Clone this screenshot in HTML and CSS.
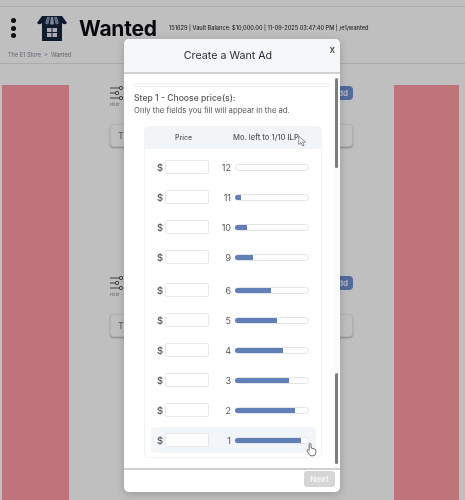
FILE: index.html
```html
<!DOCTYPE html>
<html lang="en">
<head>
    <meta charset="UTF-8">
    <meta name="viewport" content="width=device-width, initial-scale=1.0">
    <title>Wanted</title>
    <link rel="stylesheet" href="styles.css">
</head>
<body>
    <div class="page">
        <div class="top-line"></div>
        <header class="header">
            <div class="menu-dots"><span></span><span></span><span></span></div>
            <svg class="store-icon" viewBox="0 0 30 25">
                <rect x="5" y="7" width="20" height="18" fill="#16243d"/>
                <rect x="10" y="12" width="10" height="9" fill="#e4e6ea"/>
                <path d="M15 12v9M10 16.5h10" stroke="#16243d" stroke-width="1"/>
                <path d="M5 0h20l5 7q-2.500 2.500-5 0q-2.500 2.500-5 0q-2.500 2.500-5 0q-2.500 2.500-5 0q-2.500 2.500-5 0q-2.500 2.500-5 0z" fill="#16243d"/>
                <path d="M10 1h3l-1.500 7q-2 .8-3.500-.5zM17 1h3l2 6.500q-1.500 1.300-3.500.5z" fill="#7f93b5"/>
                <path d="M14 1h2l1 7q-2 1-4 0z" fill="#a9b6cc"/>
            </svg>
            <h1 class="page-title">Wanted</h1>
            <div class="status-line">151629 | Vault Balance: $10,000.00 | 11-09-2025 03:47:40 PM | /e1/wanted</div>
        </header>
        <div class="breadcrumb">The E1 Store &nbsp;&gt;&nbsp; Wanted</div>
        <div class="divider"></div>

        <main class="columns">
            <div class="red-panel"></div>
            <div class="center-col">
                <section class="ad-section">
                    <div class="tools">
                        <div class="filter">
                            <svg class="filter-icon" viewBox="0 0 14 14" fill="none" stroke="#555" stroke-width="1">
                                <path d="M0 2h9M0 7h5M0 12h9"/>
                                <circle cx="11" cy="2" r="1.700"/>
                                <circle cx="7" cy="7" r="1.700"/>
                                <circle cx="11" cy="12" r="1.700"/>
                            </svg>
                            <span>Filter</span>
                        </div>
                        <div class="add-btn">Add</div>
                    </div>
                    <div class="item-card">The</div>
                </section>
                <section class="ad-section">
                    <div class="tools">
                        <div class="filter">
                            <svg class="filter-icon" viewBox="0 0 14 14" fill="none" stroke="#555" stroke-width="1">
                                <path d="M0 2h9M0 7h5M0 12h9"/>
                                <circle cx="11" cy="2" r="1.700"/>
                                <circle cx="7" cy="7" r="1.700"/>
                                <circle cx="11" cy="12" r="1.700"/>
                            </svg>
                            <span>Filter</span>
                        </div>
                        <div class="add-btn">Add</div>
                    </div>
                    <div class="item-card">The</div>
                </section>
            </div>
            <div class="red-panel"></div>
        </main>
    </div>

    <div class="backdrop"></div>

    <div class="modal">
        <div class="modal-head">
            <h2>Create a Want Ad</h2>
            <span class="modal-close">x</span>
        </div>
        <div class="modal-body">
            <div class="progress-track"></div>
            <h3 class="step-title">Step 1 - Choose price(s):</h3>
            <p class="step-note">Only the fields you fill will appear in the ad.</p>
            <div class="price-card">
                <div class="price-head">
                    <span class="head-price">Price</span>
                    <span class="head-months">Mo. left to 1/10 ILP</span>
                </div>
                <div class="price-row"><span class="dollar">$</span><input class="price-input"><span class="months">12</span><div class="bar"></div></div>
                <div class="price-row"><span class="dollar">$</span><input class="price-input"><span class="months">11</span><div class="bar"><div class="bar-fill" style="width: 9%"></div></div></div>
                <div class="price-row"><span class="dollar">$</span><input class="price-input"><span class="months">10</span><div class="bar"><div class="bar-fill" style="width: 17%"></div></div></div>
                <div class="price-row"><span class="dollar">$</span><input class="price-input"><span class="months">9</span><div class="bar"><div class="bar-fill" style="width: 25%"></div></div></div>
                <div class="price-row row-gap"><span class="dollar">$</span><input class="price-input"><span class="months">6</span><div class="bar"><div class="bar-fill" style="width: 50%"></div></div></div>
                <div class="price-row"><span class="dollar">$</span><input class="price-input"><span class="months">5</span><div class="bar"><div class="bar-fill" style="width: 58%"></div></div></div>
                <div class="price-row"><span class="dollar">$</span><input class="price-input"><span class="months">4</span><div class="bar"><div class="bar-fill" style="width: 67%"></div></div></div>
                <div class="price-row"><span class="dollar">$</span><input class="price-input"><span class="months">3</span><div class="bar"><div class="bar-fill" style="width: 75%"></div></div></div>
                <div class="price-row"><span class="dollar">$</span><input class="price-input"><span class="months">2</span><div class="bar"><div class="bar-fill" style="width: 83%"></div></div></div>
                <div class="price-row row-active"><span class="dollar">$</span><input class="price-input"><span class="months">1</span><div class="bar"><div class="bar-fill" style="width: 92%"></div></div></div>
            </div>
            <div class="scroll-thumb thumb-top"></div>
            <div class="scroll-thumb thumb-bottom"></div>
        </div>
        <div class="modal-foot">
            <button class="next-btn">Next</button>
        </div>
    </div>

    <!-- Mouse pointers caught in the recording -->
    <svg class="cursor cursor-arrow" viewBox="0 0 12 16">
        <path d="M1 1v11l3-2.500 2 4.500 2-1-2-4.200h4z" fill="#fff" stroke="#667" stroke-width="1"/>
    </svg>
    <svg class="cursor cursor-hand" viewBox="0 0 14 18">
        <path d="M4 9V2.500a1.200 1.200 0 0 1 2.400 0V7l5 1.500q1.500.5 1.300 2.300l-.6 3.700q-.5 2.500-3 2.500H6.500q-1.500 0-2.300-1.500L1.500 11q-.6-1.300.6-1.800 1-.3 1.900 1z" fill="#fff" stroke="#444" stroke-width="1"/>
    </svg>
</body>
</html>
```

FILE: styles.css
```css
* {
    margin: 0;
    padding: 0;
    box-sizing: border-box;
    font-family: Inter, 'Liberation Sans', sans-serif;
}

html, body {
    width: 465px;
    height: 500px;
    overflow: hidden;
    background: #fff;
}

body {
    filter: blur(0.5px);
}

.page {
    height: 500px;
    display: flex;
    flex-direction: column;
    color: #111;
}

.top-line {
    height: 1px;
    margin-top: 6px;
    background: #e6e6e6;
}

.header {
    display: flex;
    align-items: center;
    height: 41px;
    padding: 1px 0 0 11px;
}

.menu-dots {
    display: flex;
    flex-direction: column;
    gap: 2.500px;
    width: 26px;
}

.menu-dots span {
    width: 5px;
    height: 5px;
    border-radius: 50%;
    background: #10141c;
}

.store-icon {
    width: 30px;
    height: 25px;
    margin-right: 12px;
}

.page-title {
    font-size: 21px;
    font-weight: 700;
    letter-spacing: -0.2px;
    width: 90px;
    color: #0b0d12;
}

.status-line {
    font-size: 5.600px;
    font-weight: 500;
    white-space: nowrap;
    color: #333;
}

.breadcrumb {
    height: 15px;
    padding-left: 8px;
    font-size: 5.600px;
    line-height: 15px;
    color: #7d8794;
}

.divider {
    height: 1px;
    background: #e4e4e4;
}

.columns {
    flex: 1;
    display: grid;
    grid-template-columns: 67px 1fr 65px;
    column-gap: 41px;
    padding: 21px 6px 0 2px;
}

.red-panel {
    background: #ff9ba6;
}

.center-col {
    display: flex;
    flex-direction: column;
    gap: 129px;
    padding-top: 1px;
}

.ad-section {
    height: 61px;
}

.tools {
    display: flex;
    justify-content: space-between;
    height: 38px;
}

.filter {
    display: flex;
    flex-direction: column;
    width: 14px;
    font-size: 4px;
    color: #777;
}

.filter-icon {
    width: 14px;
    height: 14px;
    margin-bottom: 2px;
}

.add-btn {
    height: 14px;
    padding: 0 5px;
    border-radius: 4px;
    background: #6c8fd2;
    color: #fff;
    font-size: 8px;
    font-weight: 600;
    line-height: 14px;
}

.item-card {
    height: 23px;
    padding-left: 7px;
    border: 1px solid #eee;
    border-radius: 4px;
    box-shadow: 0 1px 2px rgba(0, 0, 0, 0.3);
    background: #fff;
    font-size: 9px;
    line-height: 21px;
    color: #777;
}

.backdrop {
    position: absolute;
    inset: 0;
    background: rgba(0, 0, 0, 0.25);
}

.modal {
    position: absolute;
    left: 124px;
    top: 39px;
    width: 216px;
    height: 453px;
    display: flex;
    flex-direction: column;
    border-radius: 5px;
    background: #fff;
    box-shadow: 0 2px 10px rgba(0, 0, 0, 0.2);
}

.modal-head {
    position: relative;
    height: 35px;
    padding-right: 8px;
    border-bottom: 2px solid #cfd2d4;
    border-radius: 5px 5px 0 0;
    background: #f3f7f9;
    text-align: center;
}

.modal-head h2 {
    font-size: 10.700px;
    font-weight: 400;
    line-height: 33px;
    color: #2a2d33;
}

.modal-close {
    position: absolute;
    top: 4px;
    right: 5px;
    font-size: 10px;
    font-weight: 500;
    color: #444;
}

.modal-body {
    position: relative;
    flex: 1;
    overflow: hidden;
    padding: 9px 10px 0;
}

.modal-body::before {
    content: "";
    position: absolute;
    top: 0;
    bottom: 0;
    right: 1px;
    width: 5px;
    background: #fafafa;
}

.progress-track {
    width: 196px;
    height: 4px;
    border: 1px solid #efefef;
    border-radius: 2px;
}

.step-title {
    margin-top: 4px;
    font-size: 8.600px;
    font-weight: 500;
    line-height: 14px;
    color: #555;
}

.step-note {
    font-size: 7.700px;
    line-height: 12px;
    color: #555;
}

.price-card {
    width: 178px;
    height: 332px;
    margin: 9px 0 0 10px;
    border: 1px solid #f0f2f4;
    border-radius: 5px;
}

.price-head {
    display: flex;
    height: 22px;
    margin-bottom: 5px;
    border-radius: 5px 5px 0 0;
    background: #f1f5f8;
    font-size: 7px;
    font-weight: 500;
    line-height: 22px;
    color: #555;
}

.head-price {
    width: 78px;
    padding-left: 30px;
}

.head-months {
    white-space: nowrap;
    padding-left: 10px;
    font-size: 7.600px;
}

.price-row {
    display: flex;
    align-items: center;
    width: 165px;
    height: 26px;
    margin: 0 0 4px 6px;
    padding-left: 6px;
    border-radius: 4px;
}

.row-gap {
    margin-top: 7px;
}

.row-active {
    background: #f2f6f9;
}

.dollar {
    width: 8px;
    font-size: 9.500px;
    font-weight: 500;
    color: #555;
}

.price-input {
    width: 44px;
    height: 14px;
    border: 1px solid #e6e8ea;
    border-radius: 2px;
    background: #fff;
}

.months {
    width: 22px;
    margin-right: 4px;
    text-align: right;
    font-size: 9px;
    color: #555;
}

.bar {
    width: 74px;
    height: 7px;
    border: 1px solid #e2e4e6;
    border-radius: 3.500px;
    background: #fff;
}

.bar-fill {
    height: 100%;
    margin: 0 0 0 -1px;
    border-radius: 3px 0 0 3px;
    background: #5f7fb6;
}

.scroll-thumb {
    position: absolute;
    right: 2px;
    width: 3px;
    border-radius: 2px;
    background: #7d7d7d;
}

.thumb-top {
    top: 4px;
    height: 90px;
}

.thumb-bottom {
    top: 299px;
    height: 91px;
}

.modal-foot {
    display: flex;
    justify-content: flex-end;
    height: 24px;
    padding: 1px 5px 0 0;
    border-top: 2px solid #cfd2d4;
}

.next-btn {
    width: 31px;
    height: 16px;
    border: none;
    border-radius: 3px;
    background: #d6d6d6;
    color: #f5f5f5;
    font-size: 8px;
    font-weight: 700;
}

.cursor {
    position: absolute;
}

.cursor-arrow {
    left: 298px;
    top: 135px;
    width: 9px;
    height: 13px;
}

.cursor-hand {
    left: 306px;
    top: 442px;
    width: 11px;
    height: 15px;
}
```
